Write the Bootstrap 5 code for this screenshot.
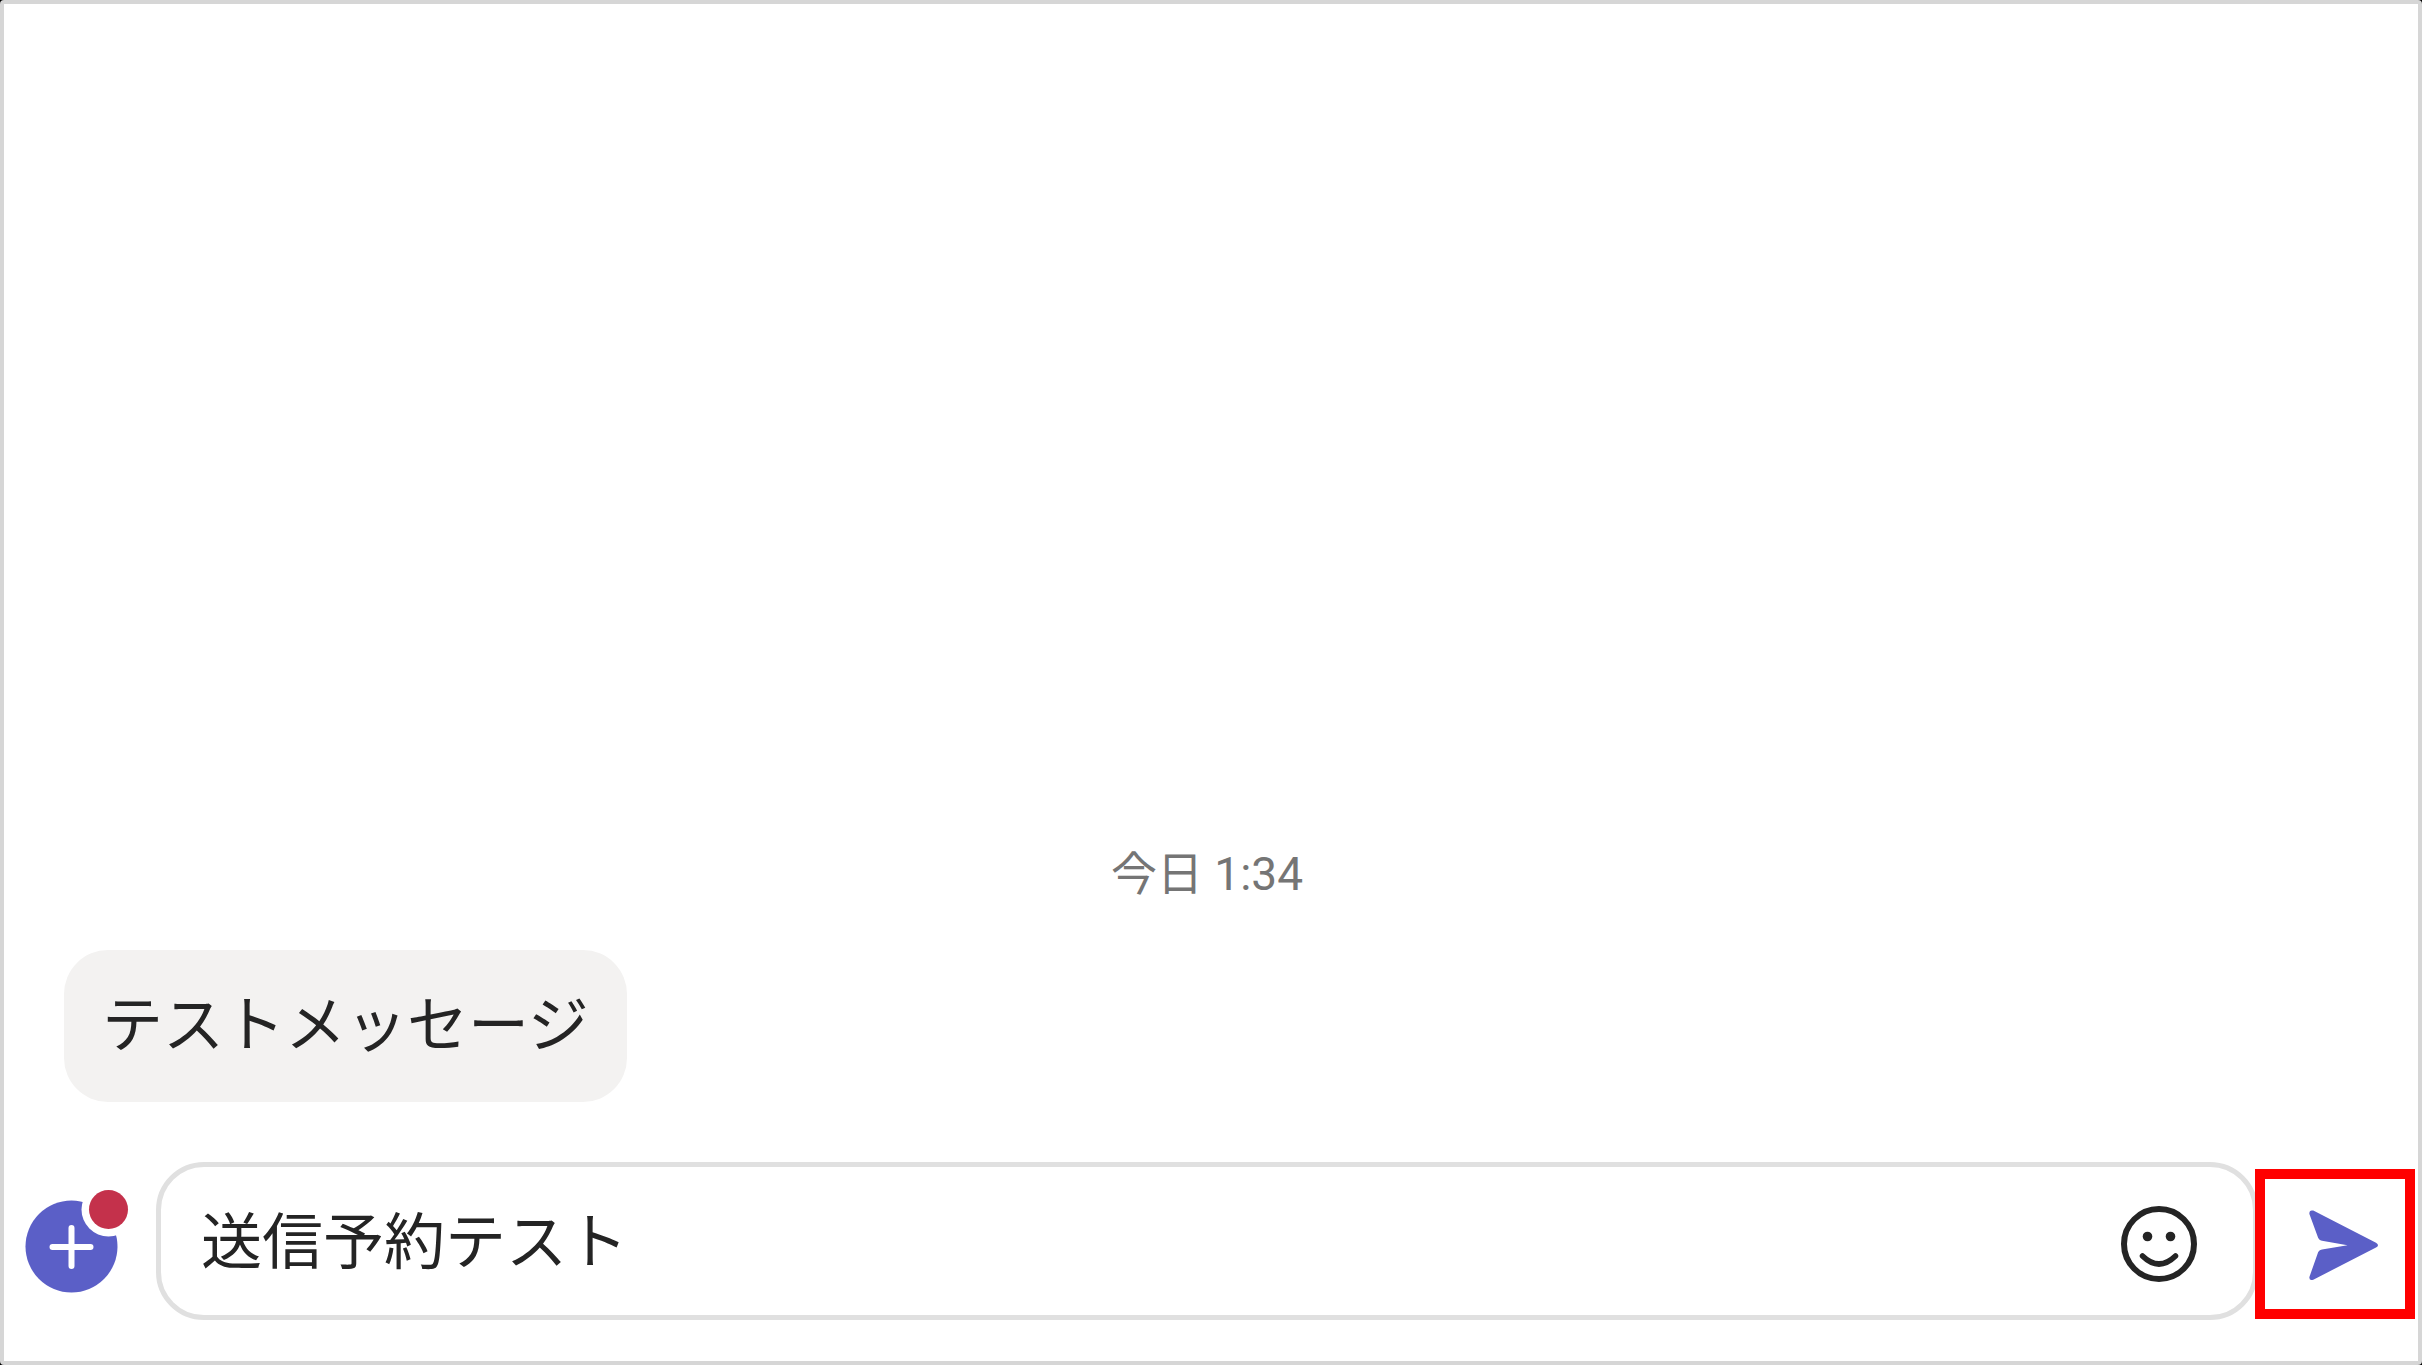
<!DOCTYPE html>
<html lang="ja">
<head>
<meta charset="utf-8">
<meta name="viewport" content="width=device-width, initial-scale=1">
<title>チャット</title>
<link href="https://cdn.jsdelivr.net/npm/bootstrap@5.3.0/dist/css/bootstrap.min.css" rel="stylesheet">
<style>
  html { background: #000; }
  body { background: #000; font-family: Roboto, "Noto Sans CJK JP", sans-serif; color: #242424; }
  .chat-window { border: 4px solid #d6d6d6; border-radius: 4px; background: #fff; }
  .day-stamp { font-size: 46px; line-height: 68px; color: #757575; margin-bottom: 42px; padding-right: 8px; }
  .bubble { background: #f3f2f1; border-radius: 44px; font-size: 61px; line-height: 88px; padding: 32px 38px; margin: 0 60px 60px; }
  .composer { padding: 0 3px 41px 20px; }
  .btn-plain { padding: 0; border: 0; line-height: 0; border-radius: 0; }
  .btn-add { margin: 2px 26px 0 0; }
  .message-box { height: 158px; border: 5px solid #e0e0e0; border-radius: 48px; padding: 0 55px 0 40px; min-width: 0; }
  .message-box .form-control { font-size: 61px; line-height: 88px; padding: 4px 0 0; color: #242424; }
  .btn-send { width: 160px; height: 150px; border: 10px solid #f00; border-radius: 0; background: #fff; padding: 0; margin: 6px 0 0 -3px; z-index: 1; }
</style>
</head>
<body>
<main class="chat-window d-flex flex-column min-vh-100">
  <section class="flex-grow-1 d-flex flex-column justify-content-end" aria-label="メッセージ">
    <time class="day-stamp text-center">今日 1:34</time>
    <div class="bubble align-self-start">テストメッセージ</div>
  </section>
  <form class="composer d-flex align-items-center">
    <button type="button" class="btn btn-plain btn-add flex-shrink-0" aria-label="追加">
      <svg width="106" height="108" viewBox="0 0 106 108" aria-hidden="true">
        <circle cx="47.5" cy="58.5" r="46" fill="#5b5fc7"/>
        <path d="M47.500 40v38M28.500 59h38" stroke="#fff" stroke-width="6" stroke-linecap="round"/>
        <circle cx="84.500" cy="21.500" r="27" fill="#fff"/>
        <circle cx="84.500" cy="21.500" r="19.500" fill="#c4314b"/>
      </svg>
    </button>
    <div class="message-box d-flex align-items-center flex-grow-1">
      <input type="text" class="form-control border-0 shadow-none bg-transparent" aria-label="メッセージを入力" value="送信予約テスト">
      <button type="button" class="btn btn-plain flex-shrink-0" aria-label="絵文字">
        <svg width="78" height="84" viewBox="0 0 78 84" fill="none" aria-hidden="true">
          <circle cx="39" cy="45" r="35" stroke="#242424" stroke-width="6"/>
          <circle cx="27.500" cy="37.500" r="4.800" fill="#242424"/>
          <circle cx="50.500" cy="37.500" r="4.800" fill="#242424"/>
          <path d="M22.500 57Q39 73 55.500 57" stroke="#242424" stroke-width="5.500" stroke-linecap="round"/>
        </svg>
      </button>
    </div>
    <button type="submit" class="btn btn-send flex-shrink-0 d-flex align-items-center justify-content-center" aria-label="送信">
      <svg width="140" height="130" viewBox="0 0 140 130" aria-hidden="true">
        <path d="M48.300 31.600 111 63.800Q115 66.200 111 68.600L48.300 100.700Q44 102 44.400 98L53.200 73Q54.500 71 57 70.600L82.500 66.200 57 61.800Q54.500 61.500 53.200 59L44.400 35Q44 30.500 48.300 31.600Z" fill="#5b5fc7"/>
      </svg>
    </button>
  </form>
</main>
<script src="https://cdn.jsdelivr.net/npm/bootstrap@5.3.0/dist/js/bootstrap.bundle.min.js"></script>
</body>
</html>
